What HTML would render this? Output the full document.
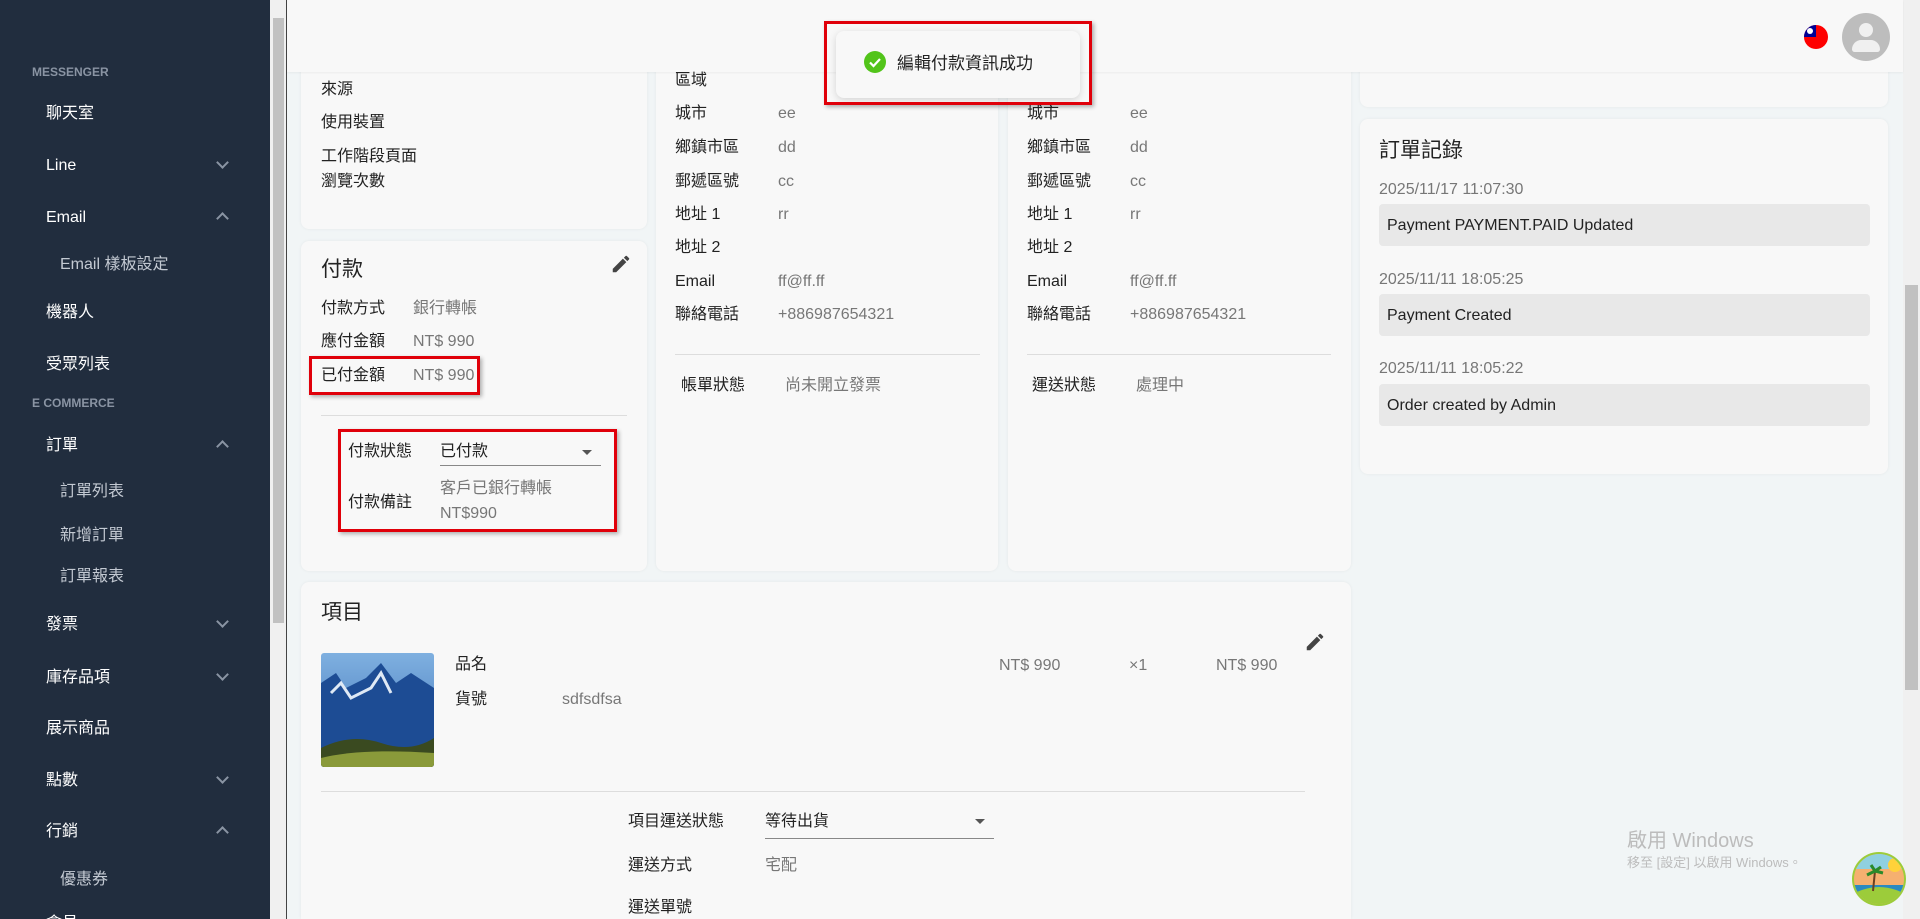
<!DOCTYPE html>
<html><head><meta charset="utf-8"><style>
*{margin:0;padding:0;box-sizing:border-box}
html{width:1920px;height:919px;overflow:hidden}
body{width:1920px;height:919px;overflow:hidden;position:relative;background:#f1f5f6;font-family:"Liberation Sans","Noto Sans CJK TC",sans-serif;color:#222;font-size:16px}
.a{position:absolute;white-space:nowrap;line-height:20px;margin-top:3px}
.sb{position:absolute;left:0;top:0;width:270px;height:919px;background:#212d3e}
.sb .h{position:absolute;left:32px;font-size:12px;font-weight:bold;color:#8a94a3;line-height:16px}
.sb .i{position:absolute;left:46px;color:#fff;font-size:16px;line-height:20px;margin-top:3px}
.sb .s{position:absolute;left:60px;color:#c3c9d2;font-size:16px;line-height:20px;margin-top:3px}
.chev{position:absolute;left:218px;width:9px;height:9px;border-right:2px solid #8a94a3;border-bottom:2px solid #8a94a3}
.dn{transform:rotate(45deg)}
.up{transform:rotate(-135deg)}
.card{position:absolute;background:#f8f8f8;border-radius:8px;box-shadow:0 0 3px rgba(0,0,0,.06)}
.l{color:#222}.v{color:#777}
.red{position:absolute;border:3px solid #e0000a;box-shadow:2px 2px 4px rgba(0,0,0,.3)}
.log{position:absolute;left:1379px;width:491px;height:42px;background:#e8e8e8;border-radius:4px;padding-left:8px;line-height:44px;font-size:16px;color:#222}
.dt{position:absolute;left:1379px;color:#777;font-size:16px;line-height:20px;margin-top:3px}
</style></head><body>
<div class="sb">
<div class="h" style="top:64px">MESSENGER</div>
<div class="i" style="top:101px">聊天室</div>
<div class="i" style="top:153px">Line</div><div class="chev dn" style="top:158px"></div>
<div class="i" style="top:205px">Email</div><div class="chev up" style="top:214px"></div>
<div class="s" style="top:252px">Email 樣板設定</div>
<div class="i" style="top:300px">機器人</div>
<div class="i" style="top:352px">受眾列表</div>
<div class="h" style="top:395px">E COMMERCE</div>
<div class="i" style="top:433px">訂單</div><div class="chev up" style="top:442px"></div>
<div class="s" style="top:479px">訂單列表</div>
<div class="s" style="top:523px">新增訂單</div>
<div class="s" style="top:564px">訂單報表</div>
<div class="i" style="top:612px">發票</div><div class="chev dn" style="top:617px"></div>
<div class="i" style="top:665px">庫存品項</div><div class="chev dn" style="top:670px"></div>
<div class="i" style="top:716px">展示商品</div>
<div class="i" style="top:768px">點數</div><div class="chev dn" style="top:773px"></div>
<div class="i" style="top:819px">行銷</div><div class="chev up" style="top:828px"></div>
<div class="s" style="top:867px">優惠券</div>
<div class="i" style="top:911px">會員</div>
</div>
<div style="position:absolute;left:270px;top:0;width:17px;height:919px;background:#f0f0f0;border-right:1px solid #444"></div>
<div style="position:absolute;left:273px;top:18px;width:11px;height:605px;background:#c1c1c1"></div>
<div style="position:absolute;left:1903px;top:0;width:17px;height:919px;background:#f0f0f0"></div>
<div style="position:absolute;left:1905px;top:285px;width:13px;height:405px;background:#c1c1c1"></div>

<div class="card" style="left:301px;top:60px;width:346px;height:169px"></div>
<div class="card" style="left:301px;top:241px;width:346px;height:330px"></div>
<div class="card" style="left:656px;top:60px;width:342px;height:511px"></div>
<div class="card" style="left:1008px;top:60px;width:343px;height:511px"></div>
<div class="card" style="left:1360px;top:60px;width:528px;height:47px"></div>
<div class="card" style="left:1360px;top:119px;width:528px;height:355px"></div>
<div class="card" style="left:301px;top:582px;width:1050px;height:337px;border-radius:8px 8px 0 0"></div>

<div style="position:absolute;left:287px;top:0;width:1616px;height:72px;background:#f8f8f8;box-shadow:0 1px 2px rgba(0,0,0,.05)"></div>
<svg style="position:absolute;left:1804px;top:25px" width="24" height="24" viewBox="0 0 24 24"><defs><clipPath id="c"><circle cx="12" cy="12" r="12"/></clipPath></defs><g clip-path="url(#c)"><rect width="24" height="24" fill="#fe0000"/><rect width="12" height="12" fill="#000095"/><circle cx="6" cy="6" r="3" fill="#fff"/></g></svg>
<div style="position:absolute;left:1842px;top:13px;width:48px;height:48px;border-radius:50%;background:#bdbdbd;overflow:hidden">
<div style="position:absolute;left:17px;top:10px;width:14px;height:14px;border-radius:50%;background:#f0f0f0"></div>
<div style="position:absolute;left:10px;top:27px;width:28px;height:12px;border-radius:10px 10px 3px 3px;background:#f0f0f0"></div></div>

<div class="a" style="left:321px;top:77px">來源</div>
<div class="a" style="left:321px;top:110px">使用裝置</div>
<div class="a" style="left:321px;top:144px">工作階段頁面</div>
<div class="a" style="left:321px;top:169px">瀏覽次數</div>
<div class="a" style="left:321px;top:255px;font-size:21px;line-height:24px">付款</div>
<svg style="position:absolute;left:610px;top:253px" width="22" height="22" viewBox="0 0 24 24"><path fill="#444" d="M3 17.25V21h3.75L17.81 9.94l-3.75-3.75L3 17.25zM20.71 7.04a1 1 0 000-1.41l-2.34-2.34a1 1 0 00-1.41 0l-1.83 1.83 3.75 3.75 1.83-1.83z"/></svg>
<div class="a l" style="left:321px;top:296px">付款方式</div><div class="a v" style="left:413px;top:296px">銀行轉帳</div>
<div class="a l" style="left:321px;top:329px">應付金額</div><div class="a v" style="left:413px;top:329px">NT$ 990</div>
<div class="a l" style="left:321px;top:363px">已付金額</div><div class="a v" style="left:413px;top:363px">NT$ 990</div>
<div class="red" style="left:309px;top:356px;width:171px;height:39px"></div>
<div style="position:absolute;left:321px;top:415px;width:306px;height:1px;background:#ddd"></div>
<div class="a l" style="left:348px;top:439px">付款狀態</div><div class="a l" style="left:440px;top:439px">已付款</div>
<div style="position:absolute;left:582px;top:450px;border:5px solid transparent;border-top:5px solid #555"></div>
<div style="position:absolute;left:440px;top:465px;width:161px;height:1px;background:#888"></div>
<div class="a l" style="left:348px;top:490px">付款備註</div>
<div class="a v" style="left:440px;top:476px">客戶已銀行轉帳</div>
<div class="a v" style="left:440px;top:501px">NT$990</div>
<div class="red" style="left:338px;top:429px;width:279px;height:103px"></div>

<div class="a l" style="left:675px;top:68px">區域</div>
<div class="a l" style="left:675px;top:101px">城市</div><div class="a v" style="left:778px;top:101px">ee</div>
<div class="a l" style="left:675px;top:135px">鄉鎮市區</div><div class="a v" style="left:778px;top:135px">dd</div>
<div class="a l" style="left:675px;top:169px">郵遞區號</div><div class="a v" style="left:778px;top:169px">cc</div>
<div class="a l" style="left:675px;top:202px">地址 1</div><div class="a v" style="left:778px;top:202px">rr</div>
<div class="a l" style="left:675px;top:235px">地址 2</div>
<div class="a l" style="left:675px;top:269px">Email</div><div class="a v" style="left:778px;top:269px">ff@ff.ff</div>
<div class="a l" style="left:675px;top:302px">聯絡電話</div><div class="a v" style="left:778px;top:302px">+886987654321</div>
<div style="position:absolute;left:675px;top:354px;width:305px;height:1px;background:#ddd"></div>
<div class="a l" style="left:681px;top:373px">帳單狀態</div><div class="a v" style="left:785px;top:373px">尚未開立發票</div>
<div class="a l" style="left:1027px;top:101px">城市</div><div class="a v" style="left:1130px;top:101px">ee</div>
<div class="a l" style="left:1027px;top:135px">鄉鎮市區</div><div class="a v" style="left:1130px;top:135px">dd</div>
<div class="a l" style="left:1027px;top:169px">郵遞區號</div><div class="a v" style="left:1130px;top:169px">cc</div>
<div class="a l" style="left:1027px;top:202px">地址 1</div><div class="a v" style="left:1130px;top:202px">rr</div>
<div class="a l" style="left:1027px;top:235px">地址 2</div>
<div class="a l" style="left:1027px;top:269px">Email</div><div class="a v" style="left:1130px;top:269px">ff@ff.ff</div>
<div class="a l" style="left:1027px;top:302px">聯絡電話</div><div class="a v" style="left:1130px;top:302px">+886987654321</div>
<div style="position:absolute;left:1027px;top:354px;width:304px;height:1px;background:#ddd"></div>
<div class="a l" style="left:1032px;top:373px">運送狀態</div><div class="a v" style="left:1136px;top:373px">處理中</div>

<div style="position:absolute;left:836px;top:31px;width:244px;height:67px;background:#f8f8f8;border-radius:8px;box-shadow:0 2px 8px rgba(0,0,0,.15)"></div>
<svg style="position:absolute;left:864px;top:51px" width="22" height="22" viewBox="0 0 22 22"><circle cx="11" cy="11" r="11" fill="#52c41a"/><path d="M6 11.5l3.5 3.5 6.5-7" stroke="#fff" stroke-width="2.2" fill="none"/></svg>
<div class="a" style="left:897px;top:50px;font-size:17px;line-height:22px">編輯付款資訊成功</div>
<div class="red" style="left:824px;top:21px;width:268px;height:84px"></div>

<div class="a" style="left:1379px;top:136px;font-size:21px;line-height:24px">訂單記錄</div>
<div class="dt" style="top:177px">2025/11/17 11:07:30</div>
<div class="log" style="top:204px">Payment PAYMENT.PAID Updated</div>
<div class="dt" style="top:267px">2025/11/11 18:05:25</div>
<div class="log" style="top:294px">Payment Created</div>
<div class="dt" style="top:356px">2025/11/11 18:05:22</div>
<div class="log" style="top:384px">Order created by Admin</div>

<div class="a" style="left:321px;top:598px;font-size:21px;line-height:24px">項目</div>
<svg style="position:absolute;left:1304px;top:631px" width="22" height="22" viewBox="0 0 24 24"><path fill="#444" d="M3 17.25V21h3.75L17.81 9.94l-3.75-3.75L3 17.25zM20.71 7.04a1 1 0 000-1.41l-2.34-2.34a1 1 0 00-1.41 0l-1.83 1.83 3.75 3.75 1.83-1.83z"/></svg>
<svg style="position:absolute;left:321px;top:653px;border-radius:3px" width="113" height="114" viewBox="0 0 113 114"><defs><linearGradient id="s" x1="0" y1="0" x2="0" y2="1"><stop offset="0" stop-color="#7fb0e0"/><stop offset="1" stop-color="#3a6fb5"/></linearGradient></defs><rect width="113" height="114" fill="url(#s)"/><path d="M0 30L15 20L25 35L45 25L60 10L75 30L90 20L113 35V114H0Z" fill="#1d4c94"/><path d="M10 40L20 30L30 45L50 35L60 20L70 40" stroke="#dfe9f5" stroke-width="3" fill="none"/><path d="M0 95Q30 80 60 90T113 85V114H0Z" fill="#3a4a20"/><path d="M0 105Q40 95 113 100V114H0Z" fill="#8a9a3a"/></svg>
<div class="a l" style="left:455px;top:652px">品名</div>
<div class="a l" style="left:455px;top:687px">貨號</div><div class="a v" style="left:562px;top:687px">sdfsdfsa</div>
<div class="a v" style="left:999px;top:653px">NT$ 990</div>
<div class="a v" style="left:1129px;top:653px">×1</div>
<div class="a v" style="left:1216px;top:653px">NT$ 990</div>
<div style="position:absolute;left:321px;top:791px;width:984px;height:1px;background:#ddd"></div>
<div class="a l" style="left:628px;top:809px">項目運送狀態</div><div class="a l" style="left:765px;top:809px">等待出貨</div>
<div style="position:absolute;left:975px;top:819px;border:5px solid transparent;border-top:5px solid #555"></div>
<div style="position:absolute;left:765px;top:838px;width:229px;height:1px;background:#888"></div>
<div class="a l" style="left:628px;top:853px">運送方式</div><div class="a v" style="left:765px;top:853px">宅配</div>
<div class="a l" style="left:628px;top:895px">運送單號</div>

<div class="a" style="left:1627px;top:826px;font-size:20px;line-height:24px;color:#bcbcbc">啟用 Windows</div>
<div class="a" style="left:1627px;top:851px;font-size:13px;line-height:17px;color:#bcbcbc">移至 [設定] 以啟用 Windows。</div>
<svg style="position:absolute;left:1851px;top:851px" width="56" height="56" viewBox="0 0 56 56"><defs><clipPath id="k"><circle cx="28" cy="28" r="25"/></clipPath></defs><circle cx="28" cy="28" r="27" fill="#9ccc3a"/><g clip-path="url(#k)"><rect width="56" height="56" fill="#f5b070"/><rect y="0" width="56" height="18" fill="#8fd0e0"/><circle cx="44" cy="14" r="7" fill="#ffd23a"/><rect y="34" width="56" height="8" fill="#2a8ac0"/><path d="M0 44Q28 28 56 44V56H0Z" fill="#9ccc3a"/><path d="M22 40L24 20" stroke="#6b4020" stroke-width="2"/><path d="M24 20l-8 4M24 20l8 2M24 20l-4-6M24 20l6-4" stroke="#2a8a2a" stroke-width="3"/></g></svg>
</body></html>
